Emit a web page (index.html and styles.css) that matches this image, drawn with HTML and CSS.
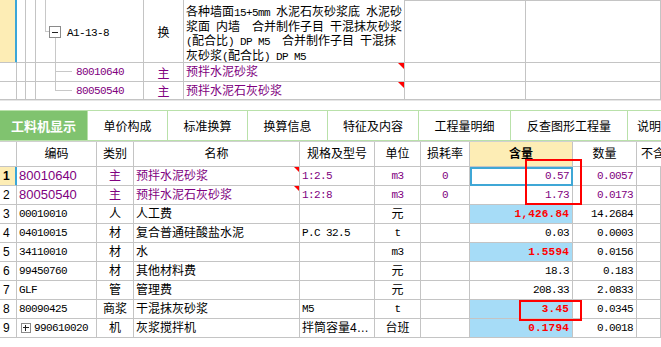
FILE: index.html
```html
<!DOCTYPE html>
<html lang="zh">
<head>
  <meta charset="UTF-8">
  <title>工料机显示</title>
  <link rel="stylesheet" href="styles.css">
</head>
<body>
  <div class="page">

    <!-- 定额行 -->
    <div class="quota">
      <div class="qc sel"></div>
      <div class="qc"></div>
      <div class="qc"></div>
      <div class="qc tree">
        <span class="stub"></span>
        <span class="node"><span class="toggle"></span><span class="tail"></span></span>
        <span class="qcode mono">A1-13-8</span>
      </div>
      <div class="qc qtype">换</div>
      <div class="qc desc">
        各种墙面<span class="lat">15+5mm </span>水泥石灰砂浆底<span class="lat"> </span>水泥砂<br>
        浆面<span class="lat"> </span>内墙<span class="lat">  </span>合并制作子目<span class="lat"> </span>干混抹灰砂浆<br>
        <span class="lat">(</span>配合比<span class="lat">) DP M5  </span>合并制作子目<span class="lat"> </span>干混抹<br>
        灰砂浆<span class="lat">(</span>配合比<span class="lat">) DP M5</span>
      </div>
      <div class="qc edge"></div>
      <div class="qc edge"></div>

      <div class="qc"></div>
      <div class="qc"></div>
      <div class="qc"></div>
      <div class="qc tree child">
        <span class="tee"><span class="tee-h"></span></span>
        <span class="qcode mono purple">80010640</span>
      </div>
      <div class="qc qtype purple">主</div>
      <div class="qc qname purple flag">预拌水泥砂浆</div>
      <div class="qc"></div>
      <div class="qc"></div>

      <div class="qc"></div>
      <div class="qc"></div>
      <div class="qc"></div>
      <div class="qc tree child">
        <span class="elbow"></span>
        <span class="qcode mono purple">80050540</span>
      </div>
      <div class="qc qtype purple">主</div>
      <div class="qc qname purple flag">预拌水泥石灰砂浆</div>
      <div class="qc"></div>
      <div class="qc"></div>
    </div>

    <div class="split"></div>

    <!-- 页签 -->
    <div class="tabs">
      <div class="tab on">工料机显示</div>
      <div class="tab">单价构成</div>
      <div class="tab">标准换算</div>
      <div class="tab">换算信息</div>
      <div class="tab">特征及内容</div>
      <div class="tab">工程量明细</div>
      <div class="tab">反查图形工程量</div>
      <div class="tab last">说明</div>
    </div>

    <!-- 工料机表格 -->
    <div class="sheet">
      <div class="thead">
        <div class="c"></div>
        <div class="c">编码</div>
        <div class="c">类别</div>
        <div class="c">名称</div>
        <div class="c">规格及型号</div>
        <div class="c">单位</div>
        <div class="c">损耗率</div>
        <div class="c active">含量</div>
        <div class="c">数量</div>
        <div class="c left">不含</div>
      </div>

      <div class="trow">
        <div class="c no sel">1</div>
        <div class="c code wide purple">80010640</div>
        <div class="c ctr purple">主</div>
        <div class="c name purple flag">预拌水泥砂浆</div>
        <div class="c spec mono purple">1:2.5</div>
        <div class="c ctr mono purple">m3</div>
        <div class="c ctr mono purple">0</div>
        <div class="c num mono purple pick">0.57</div>
        <div class="c num mono purple">0.0057</div>
        <div class="c"></div>
      </div>

      <div class="trow">
        <div class="c no">2</div>
        <div class="c code wide purple">80050540</div>
        <div class="c ctr purple">主</div>
        <div class="c name purple flag">预拌水泥石灰砂浆</div>
        <div class="c spec mono purple">1:2:8</div>
        <div class="c ctr mono purple">m3</div>
        <div class="c ctr mono purple">0</div>
        <div class="c num mono purple">1.73</div>
        <div class="c num mono purple">0.0173</div>
        <div class="c"></div>
      </div>

      <div class="trow">
        <div class="c no">3</div>
        <div class="c code mono">00010010</div>
        <div class="c ctr">人</div>
        <div class="c name">人工费</div>
        <div class="c spec"></div>
        <div class="c ctr">元</div>
        <div class="c"></div>
        <div class="c num mono hl">1,426.84</div>
        <div class="c num mono">14.2684</div>
        <div class="c"></div>
      </div>

      <div class="trow">
        <div class="c no">4</div>
        <div class="c code mono">04010015</div>
        <div class="c ctr">材</div>
        <div class="c name">复合普通硅酸盐水泥</div>
        <div class="c spec mono">P.C 32.5</div>
        <div class="c ctr mono">t</div>
        <div class="c"></div>
        <div class="c num mono">0.03</div>
        <div class="c num mono">0.0003</div>
        <div class="c"></div>
      </div>

      <div class="trow">
        <div class="c no">5</div>
        <div class="c code mono">34110010</div>
        <div class="c ctr">材</div>
        <div class="c name">水</div>
        <div class="c spec"></div>
        <div class="c ctr mono">m3</div>
        <div class="c"></div>
        <div class="c num mono hl">1.5594</div>
        <div class="c num mono">0.0156</div>
        <div class="c"></div>
      </div>

      <div class="trow">
        <div class="c no">6</div>
        <div class="c code mono">99450760</div>
        <div class="c ctr">材</div>
        <div class="c name">其他材料费</div>
        <div class="c spec"></div>
        <div class="c ctr">元</div>
        <div class="c"></div>
        <div class="c num mono">18.3</div>
        <div class="c num mono">0.183</div>
        <div class="c"></div>
      </div>

      <div class="trow">
        <div class="c no">7</div>
        <div class="c code mono">GLF</div>
        <div class="c ctr">管</div>
        <div class="c name">管理费</div>
        <div class="c spec"></div>
        <div class="c ctr">元</div>
        <div class="c"></div>
        <div class="c num mono">208.33</div>
        <div class="c num mono">2.0833</div>
        <div class="c"></div>
      </div>

      <div class="trow">
        <div class="c no">8</div>
        <div class="c code mono">80090425</div>
        <div class="c ctr">商浆</div>
        <div class="c name">干混抹灰砂浆</div>
        <div class="c spec mono">M5</div>
        <div class="c ctr mono">t</div>
        <div class="c"></div>
        <div class="c num mono hl">3.45</div>
        <div class="c num mono">0.0345</div>
        <div class="c"></div>
      </div>

      <div class="trow">
        <div class="c no">9</div>
        <div class="c code expand"><span class="toggle plus"></span><span class="mono">990610020</span></div>
        <div class="c ctr">机</div>
        <div class="c name">灰浆搅拌机</div>
        <div class="c spec">拌筒容量4…</div>
        <div class="c ctr">台班</div>
        <div class="c"></div>
        <div class="c num mono hl">0.1794</div>
        <div class="c num mono">0.0018</div>
        <div class="c"></div>
      </div>
    </div>

    <!-- 红框标注 -->
    <div class="mark mark-a"></div>
    <div class="mark mark-b"></div>
  </div>
</body>
</html>
```

FILE: styles.css
```css
* {
  box-sizing: border-box;
}

body {
  margin: 0;
  background: #ffffff;
  font-family: "Liberation Sans", "Noto Sans CJK SC", sans-serif;
  font-size: 12px;
  color: #000;
}

.page {
  position: relative;
  width: 661px;
  height: 347px;
  overflow: hidden;
}

.purple {
  color: #800080;
}

.mono {
  font-family: "Liberation Mono", "Noto Sans CJK SC", monospace;
  font-size: 11px;
  letter-spacing: -0.6px;
}

/* ---------- 定额行 ---------- */

.quota {
  display: grid;
  grid-template-columns: 17px 9px 10px 108px 40px 221px 121px 1fr;
  grid-template-rows: 63px 19px 18px;
}

.qc {
  border-right: 1px solid #c4c4c4;
  border-bottom: 1px solid #c4c4c4;
  white-space: nowrap;
  overflow: hidden;
  position: relative;
}

.qc.sel {
  background: #fdedb5;
  border-right-color: #3ba6d8;
  box-shadow: inset -1px 0 #3ba6d8;
}

.qc.edge {
  border-top: 1px solid #c4c4c4;
}

.tree {
  display: flex;
  align-items: flex-start;
  padding-left: 9px;
}

.stub {
  width: 4px;
  height: 32px;
  border-left: 1px solid #c8c8c8;
  border-bottom: 1px solid #c8c8c8;
}

.node {
  display: flex;
  flex-direction: column;
  align-items: center;
  align-self: stretch;
  width: 12px;
  padding-top: 26px;
}

.tail {
  flex: 1;
  width: 1px;
  background: #c8c8c8;
}

.toggle {
  display: block;
  flex: none;
  width: 12px;
  height: 12px;
  border: 1px solid #8a8a8a;
  background: #fff;
  position: relative;
}

.toggle::before {
  content: "";
  position: absolute;
  left: 2px;
  right: 2px;
  top: 5px;
  height: 1px;
  background: #222;
}

.toggle.plus {
  width: 10px;
  height: 10px;
}

.toggle.plus::before {
  top: 3px;
  left: 1px;
  right: 1px;
}

.toggle.plus::after {
  content: "";
  position: absolute;
  top: 1px;
  bottom: 1px;
  left: 3px;
  width: 1px;
  background: #222;
}

.qcode {
  margin-left: 6px;
  margin-top: 26px;
  line-height: 14px;
}

.tree.child {
  padding-left: 19px;
  align-items: center;
}

.tee {
  align-self: stretch;
  width: 17px;
  border-left: 1px solid #c8c8c8;
}

.tee-h {
  display: block;
  height: 9px;
  border-bottom: 1px solid #c8c8c8;
}

.elbow {
  align-self: flex-start;
  width: 17px;
  height: 9px;
  border-left: 1px solid #c8c8c8;
  border-bottom: 1px solid #c8c8c8;
}

.tree.child .qcode {
  margin: 0 0 0 4px;
}

.qtype {
  display: flex;
  align-items: center;
  justify-content: center;
}

.desc {
  padding: 6px 0 0 2px;
  line-height: 13.5px;
}

.lat {
  font-family: "Liberation Mono", monospace;
  font-size: 11px;
  letter-spacing: -0.6px;
  white-space: pre;
}

.qname {
  padding-left: 2px;
  line-height: 18px;
}

.flag::after {
  content: "";
  position: absolute;
  top: 0;
  right: 0;
  border-left: 6px solid transparent;
  border-top: 6px solid #ff0000;
}

.split {
  height: 10px;
  border-top: 1px solid #e6e6e6;
}

/* ---------- 页签 ---------- */

.tabs {
  display: grid;
  grid-template-columns: 88px 80px 80px 80px 91px 92px 117px 1fr;
  height: 31px;
  border-top: 1px solid #b9e1aa;
  border-bottom: 1px solid #b9e1aa;
}

.tab {
  display: flex;
  align-items: center;
  justify-content: center;
  border-right: 1px solid #b9e1aa;
  white-space: nowrap;
  overflow: hidden;
}

.tab.last {
  justify-content: flex-start;
  padding-left: 9px;
  border-right: none;
}

.tab.on {
  background: #80c36f;
  color: #fff;
  font-weight: bold;
  font-size: 13px;
}

/* ---------- 表格 ---------- */

.sheet {
  border-top: 1px solid #d0d0d0;
}

.thead,
.trow {
  display: grid;
  grid-template-columns: 17px 80px 37px 166px 75px 46px 49px 103px 64px 1fr;
}

.thead {
  height: 25px;
}

.trow {
  height: 19px;
}

.c {
  border-right: 1px solid #c4c4c4;
  border-bottom: 1px solid #c4c4c4;
  line-height: 18px;
  padding: 0 2px;
  white-space: nowrap;
  overflow: hidden;
  position: relative;
}

.thead .c {
  line-height: 24px;
  text-align: center;
}

.thead .c.active {
  background: #fdedb5;
  font-weight: bold;
}

.thead .c.left {
  text-align: left;
  padding-left: 4px;
  border-right: none;
}

.c.no {
  padding-left: 3px;
}

.c.no.sel {
  background: #fdedb5;
  font-weight: bold;
  border-right-color: #3ba6d8;
  box-shadow: inset -1px 0 #3ba6d8;
}

.c.wide {
  font-size: 13px;
}

.c.ctr {
  text-align: center;
}

.c.num {
  text-align: right;
  padding-right: 3px;
}

.c.flag::after {
  border-left-width: 5px;
  border-top-width: 5px;
}

.c.hl {
  background: #a6dcf7;
  color: #ff0000;
  font-weight: bold;
  letter-spacing: 0.2px;
}

.c.pick {
  outline: 2px solid #3fa7d6;
  outline-offset: -2px;
}

.c.expand {
  display: flex;
  align-items: center;
  gap: 3px;
  padding-left: 4px;
}

/* ---------- 红框标注 ---------- */

.mark {
  position: absolute;
  border: 2px solid #ff0000;
}

.mark-a {
  left: 525px;
  top: 159px;
  width: 57px;
  height: 46px;
}

.mark-b {
  left: 519px;
  top: 300px;
  width: 63px;
  height: 21px;
}
```
